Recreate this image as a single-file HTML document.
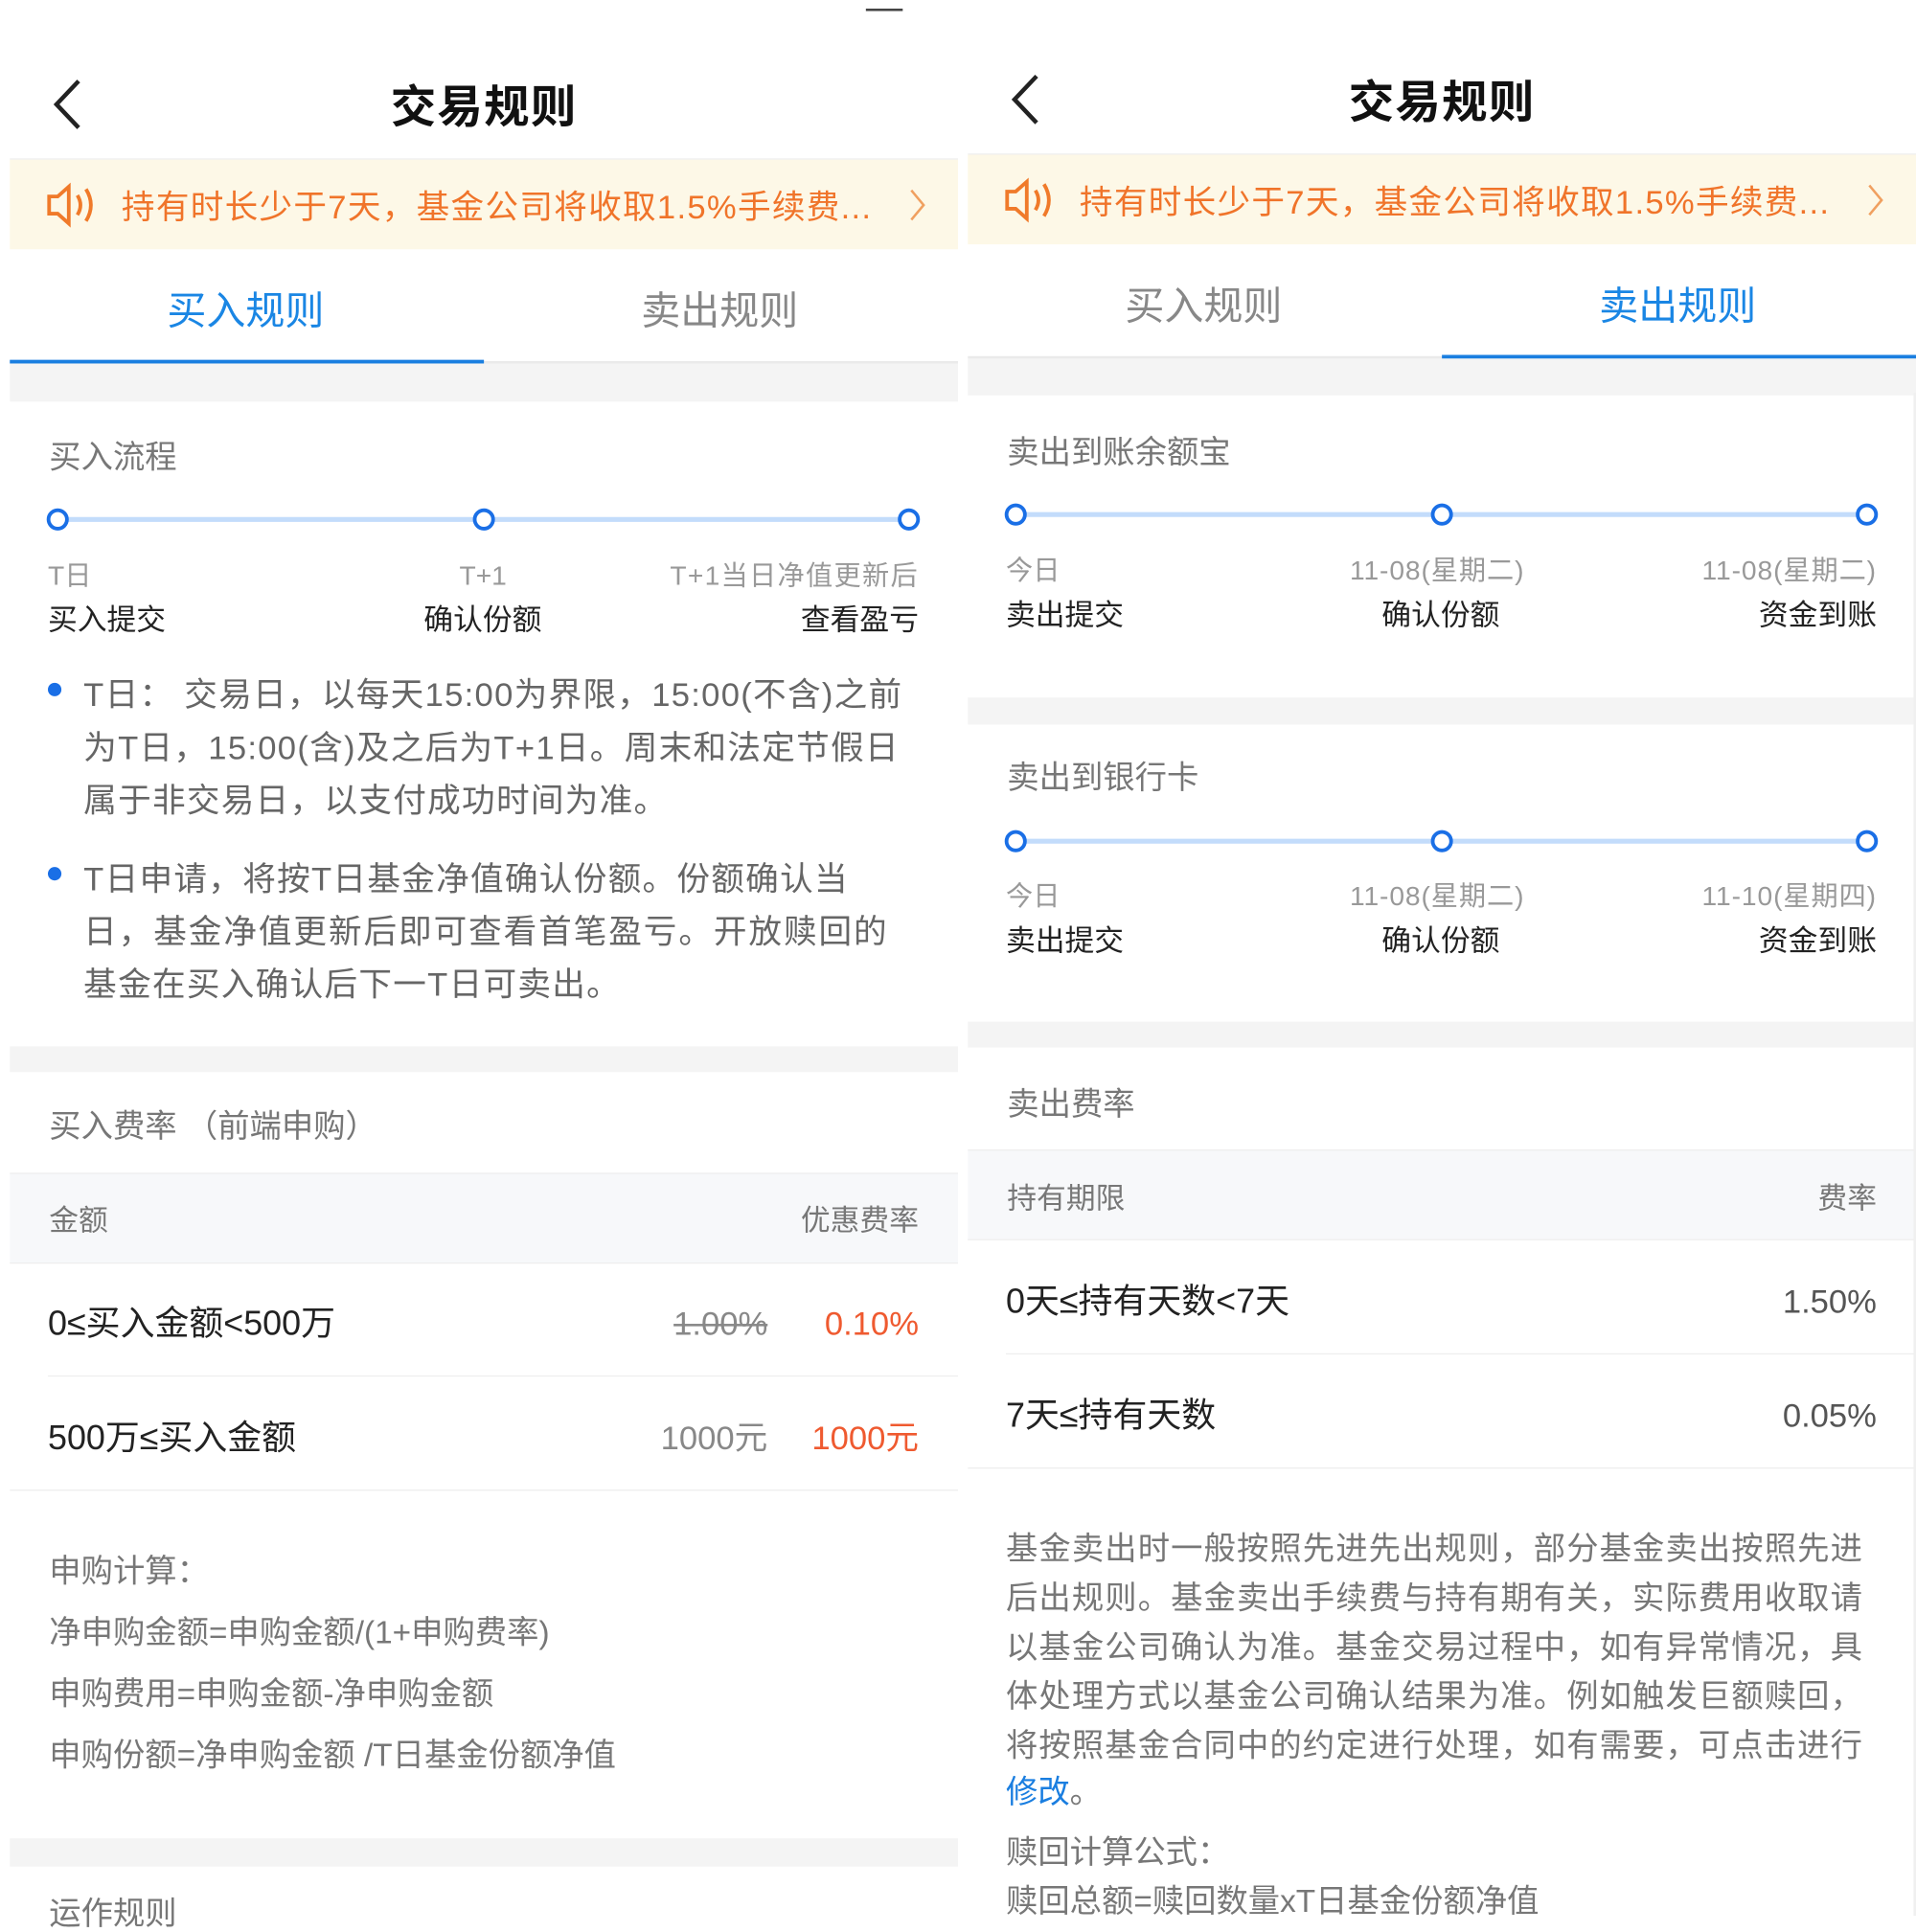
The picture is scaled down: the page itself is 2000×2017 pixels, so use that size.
<!DOCTYPE html>
<html><head><meta charset="utf-8">
<style>
html,body{margin:0;padding:0;background:#fff;width:2000px;height:2000px;overflow:hidden}
#s{position:absolute;left:0;top:0;width:1560px;height:1560px;transform:scale(1.28205);transform-origin:0 0;font-family:"Liberation Sans","Noto Sans CJK SC",sans-serif;}
.t{position:absolute;white-space:nowrap;line-height:1;margin-top:3px}
.b{position:absolute}
.g{color:#777}.d{color:#222}
.ls{letter-spacing:0.85px}
</style></head><body><div id="s">
<div class="b" style="left:705px;top:7px;width:30px;height:2px;background:#444"></div>

<!-- LEFT PANEL -->
<svg class="b" style="left:38px;top:62px" width="32" height="46"><path d="M26 4 L8 23 L26 42" fill="none" stroke="#222" stroke-width="3.5"/></svg>
<div class="t d" style="left:318px;top:66px;font-size:37px;font-weight:bold;color:#111;letter-spacing:1px">交易规则</div>
<div class="b" style="left:8px;top:129px;width:772px;height:1px;background:#eee"></div>
<div class="b" style="left:8px;top:130px;width:772px;height:73px;background:#fdf8e7"></div>
<svg class="b" style="left:36px;top:147px" width="46" height="40"><path d="M4 13 H11 L20 5 V35 L11 27 H4 Z" fill="none" stroke="#f07a2a" stroke-width="3"/><path d="M27 12 Q32 20 27 28" fill="none" stroke="#f07a2a" stroke-width="3"/><path d="M34 7 Q42 20 34 33" fill="none" stroke="#f07a2a" stroke-width="3"/></svg>
<div class="t" style="left:99px;top:153px;font-size:27px;color:#f0742a;letter-spacing:1px">持有时长少于7天，基金公司将收取1.5%手续费...</div>
<svg class="b" style="left:738px;top:152px" width="18" height="30"><path d="M4 3 L14 15 L4 27" fill="none" stroke="#f0a060" stroke-width="2"/></svg>
<div class="t" style="left:136px;top:234px;font-size:32px;color:#1a86e4">买入规则</div>
<div class="t" style="left:522px;top:234px;font-size:32px;color:#888">卖出规则</div>
<div class="b" style="left:8px;top:294px;width:772px;height:2px;background:#eaeaea"></div>
<div class="b" style="left:8px;top:293px;width:386px;height:3px;background:#1a7ee0"></div>
<div class="b" style="left:8px;top:296px;width:772px;height:31px;background:#f4f4f4"></div>
<div class="t g" style="left:40px;top:356px;font-size:26px">买入流程</div>
<div class="b" style="left:47px;top:421px;width:693px;height:4px;background:#c3dcfb"></div>
<div class="b" style="left:38px;top:414px;width:12px;height:12px;border:3.5px solid #1a6fe6;border-radius:50%;background:#fff"></div>
<div class="b" style="left:385px;top:414px;width:12px;height:12px;border:3.5px solid #1a6fe6;border-radius:50%;background:#fff"></div>
<div class="b" style="left:731px;top:414px;width:12px;height:12px;border:3.5px solid #1a6fe6;border-radius:50%;background:#fff"></div>
<div class="t" style="left:39px;top:455px;font-size:22px;color:#999">T日</div>
<div class="t" style="left:374px;top:455px;font-size:22px;color:#999">T+1</div>
<div class="t" style="right:812px;top:455px;font-size:22px;color:#999;letter-spacing:1px">T+1当日净值更新后</div>
<div class="t d" style="left:39px;top:491px;font-size:24px">买入提交</div>
<div class="t d" style="left:345px;top:491px;font-size:24px">确认份额</div>
<div class="t d" style="right:812px;top:491px;font-size:24px">查看盈亏</div>
<div class="b" style="left:39px;top:556px;width:11px;height:11px;border-radius:50%;background:#1a6fe6"></div>
<div class="t g" style="left:68px;top:550px;font-size:27px;color:#666;letter-spacing:1px">T日： 交易日，以每天15:00为界限，15:00(不含)之前</div>
<div class="t g" style="left:68px;top:593px;font-size:27px;color:#666;letter-spacing:1px">为T日，15:00(含)及之后为T+1日。周末和法定节假日</div>
<div class="t g" style="left:68px;top:636px;font-size:27px;color:#666;letter-spacing:1px">属于非交易日，以支付成功时间为准。</div>
<div class="b" style="left:39px;top:706px;width:11px;height:11px;border-radius:50%;background:#1a6fe6"></div>
<div class="t g" style="left:68px;top:700px;font-size:27px;color:#666;letter-spacing:1px">T日申请，将按T日基金净值确认份额。份额确认当</div>
<div class="t g" style="left:68px;top:743px;font-size:27px;color:#666;letter-spacing:1.5px">日，基金净值更新后即可查看首笔盈亏。开放赎回的</div>
<div class="t g" style="left:68px;top:786px;font-size:27px;color:#666;letter-spacing:1px">基金在买入确认后下一T日可卖出。</div>
<div class="b" style="left:8px;top:852px;width:772px;height:21px;background:#f4f4f4"></div>
<div class="t g" style="left:40px;top:901px;font-size:26px">买入费率 （前端申购）</div>
<div class="b" style="left:8px;top:955px;width:772px;height:72px;background:#f7f8fa;border-top:1px solid #eee;border-bottom:1px solid #eee"></div>
<div class="t g" style="left:40px;top:980px;font-size:24px">金额</div>
<div class="t g" style="right:812px;top:980px;font-size:24px">优惠费率</div>
<div class="t d" style="left:39px;top:1061px;font-size:28px">0≤买入金额&lt;500万</div>
<div class="t" style="right:935px;top:1062px;font-size:27px;color:#888;text-decoration:line-through">1.00%</div>
<div class="t" style="right:812px;top:1062px;font-size:27px;color:#ef5a30">0.10%</div>
<div class="b" style="left:39px;top:1120px;width:741px;height:1px;background:#eee"></div>
<div class="t d" style="left:39px;top:1154px;font-size:28px">500万≤买入金额</div>
<div class="t" style="right:935px;top:1155px;font-size:27px;color:#888">1000元</div>
<div class="t" style="right:812px;top:1155px;font-size:27px;color:#ef5a30">1000元</div>
<div class="b" style="left:8px;top:1213px;width:772px;height:1px;background:#eee"></div>
<div class="t g" style="left:40px;top:1263px;font-size:26px">申购计算：</div>
<div class="t g" style="left:40px;top:1313px;font-size:26px">净申购金额=申购金额/(1+申购费率)</div>
<div class="t g" style="left:40px;top:1363px;font-size:26px">申购费用=申购金额-净申购金额</div>
<div class="t g" style="left:40px;top:1413px;font-size:26px">申购份额=净申购金额 /T日基金份额净值</div>
<div class="b" style="left:8px;top:1497px;width:772px;height:23px;background:#f4f4f4"></div>
<div class="t g" style="left:40px;top:1542px;font-size:26px">运作规则</div>

<!-- RIGHT PANEL -->
<svg class="b" style="left:818px;top:58px" width="32" height="46"><path d="M26 4 L8 23 L26 42" fill="none" stroke="#222" stroke-width="3.5"/></svg>
<div class="t d" style="left:1098px;top:62px;font-size:37px;font-weight:bold;color:#111;letter-spacing:1px">交易规则</div>
<div class="b" style="left:788px;top:125px;width:772px;height:1px;background:#eee"></div>
<div class="b" style="left:788px;top:126px;width:772px;height:73px;background:#fdf8e7"></div>
<svg class="b" style="left:816px;top:143px" width="46" height="40"><path d="M4 13 H11 L20 5 V35 L11 27 H4 Z" fill="none" stroke="#f07a2a" stroke-width="3"/><path d="M27 12 Q32 20 27 28" fill="none" stroke="#f07a2a" stroke-width="3"/><path d="M34 7 Q42 20 34 33" fill="none" stroke="#f07a2a" stroke-width="3"/></svg>
<div class="t" style="left:879px;top:149px;font-size:27px;color:#f0742a;letter-spacing:1px">持有时长少于7天，基金公司将收取1.5%手续费...</div>
<svg class="b" style="left:1518px;top:148px" width="18" height="30"><path d="M4 3 L14 15 L4 27" fill="none" stroke="#f0a060" stroke-width="2"/></svg>
<div class="t" style="left:916px;top:230px;font-size:32px;color:#888">买入规则</div>
<div class="t" style="left:1302px;top:230px;font-size:32px;color:#1a86e4">卖出规则</div>
<div class="b" style="left:788px;top:290px;width:772px;height:2px;background:#eaeaea"></div>
<div class="b" style="left:1174px;top:289px;width:386px;height:3px;background:#1a7ee0"></div>
<div class="b" style="left:788px;top:292px;width:772px;height:30px;background:#f4f4f4"></div>
<div class="t g" style="left:820px;top:352px;font-size:26px">卖出到账余额宝</div>
<div class="b" style="left:827px;top:417px;width:693px;height:4px;background:#c3dcfb"></div>
<div class="b" style="left:818px;top:410px;width:12px;height:12px;border:3.5px solid #1a6fe6;border-radius:50%;background:#fff"></div>
<div class="b" style="left:1165px;top:410px;width:12px;height:12px;border:3.5px solid #1a6fe6;border-radius:50%;background:#fff"></div>
<div class="b" style="left:1511px;top:410px;width:12px;height:12px;border:3.5px solid #1a6fe6;border-radius:50%;background:#fff"></div>
<div class="t" style="left:819px;top:451px;font-size:22px;color:#999">今日</div>
<div class="t" style="left:1099px;top:451px;font-size:22px;color:#999;letter-spacing:0.7px">11-08(星期二)</div>
<div class="t" style="right:32px;top:451px;font-size:22px;color:#999;letter-spacing:0.7px">11-08(星期二)</div>
<div class="t d" style="left:819px;top:487px;font-size:24px">卖出提交</div>
<div class="t d" style="left:1125px;top:487px;font-size:24px">确认份额</div>
<div class="t d" style="right:32px;top:487px;font-size:24px">资金到账</div>
<div class="b" style="left:788px;top:568px;width:772px;height:22px;background:#f4f4f4"></div>
<div class="t g" style="left:820px;top:617px;font-size:26px">卖出到银行卡</div>
<div class="b" style="left:827px;top:683px;width:693px;height:4px;background:#c3dcfb"></div>
<div class="b" style="left:818px;top:676px;width:12px;height:12px;border:3.5px solid #1a6fe6;border-radius:50%;background:#fff"></div>
<div class="b" style="left:1165px;top:676px;width:12px;height:12px;border:3.5px solid #1a6fe6;border-radius:50%;background:#fff"></div>
<div class="b" style="left:1511px;top:676px;width:12px;height:12px;border:3.5px solid #1a6fe6;border-radius:50%;background:#fff"></div>
<div class="t" style="left:819px;top:716px;font-size:22px;color:#999">今日</div>
<div class="t" style="left:1099px;top:716px;font-size:22px;color:#999;letter-spacing:0.7px">11-08(星期二)</div>
<div class="t" style="right:32px;top:716px;font-size:22px;color:#999;letter-spacing:0.7px">11-10(星期四)</div>
<div class="t d" style="left:819px;top:752px;font-size:24px">卖出提交</div>
<div class="t d" style="left:1125px;top:752px;font-size:24px">确认份额</div>
<div class="t d" style="right:32px;top:752px;font-size:24px">资金到账</div>
<div class="b" style="left:788px;top:832px;width:772px;height:21px;background:#f4f4f4"></div>
<div class="t g" style="left:820px;top:883px;font-size:26px">卖出费率</div>
<div class="b" style="left:788px;top:936px;width:772px;height:72px;background:#f7f8fa;border-top:1px solid #eee;border-bottom:1px solid #eee"></div>
<div class="t g" style="left:820px;top:962px;font-size:24px">持有期限</div>
<div class="t g" style="right:32px;top:962px;font-size:24px">费率</div>
<div class="t d" style="left:819px;top:1043px;font-size:28px">0天≤持有天数&lt;7天</div>
<div class="t" style="right:32px;top:1044px;font-size:27px;color:#555">1.50%</div>
<div class="b" style="left:819px;top:1102px;width:741px;height:1px;background:#eee"></div>
<div class="t d" style="left:819px;top:1136px;font-size:28px">7天≤持有天数</div>
<div class="t" style="right:32px;top:1137px;font-size:27px;color:#555">0.05%</div>
<div class="b" style="left:788px;top:1195px;width:772px;height:1px;background:#eee"></div>
<div class="t g ls" style="left:819px;top:1245px;font-size:26px">基金卖出时一般按照先进先出规则，部分基金卖出按照先进</div>
<div class="t g ls" style="left:819px;top:1285px;font-size:26px">后出规则。基金卖出手续费与持有期有关，实际费用收取请</div>
<div class="t g ls" style="left:819px;top:1325px;font-size:26px">以基金公司确认为准。基金交易过程中，如有异常情况，具</div>
<div class="t g ls" style="left:819px;top:1365px;font-size:26px">体处理方式以基金公司确认结果为准。例如触发巨额赎回，</div>
<div class="t g ls" style="left:819px;top:1405px;font-size:26px">将按照基金合同中的约定进行处理，如有需要，可点击进行</div>
<div class="t g" style="left:819px;top:1443px;font-size:26px"><span style="color:#1a7ee0">修改</span>。</div>
<div class="t g" style="left:819px;top:1492px;font-size:26px">赎回计算公式：</div>
<div class="t g" style="left:819px;top:1532px;font-size:26px">赎回总额=赎回数量xT日基金份额净值</div>
<div class="b" style="left:1558px;top:320px;width:2px;height:1240px;background:#f0f0f0"></div>
</div></body></html>
